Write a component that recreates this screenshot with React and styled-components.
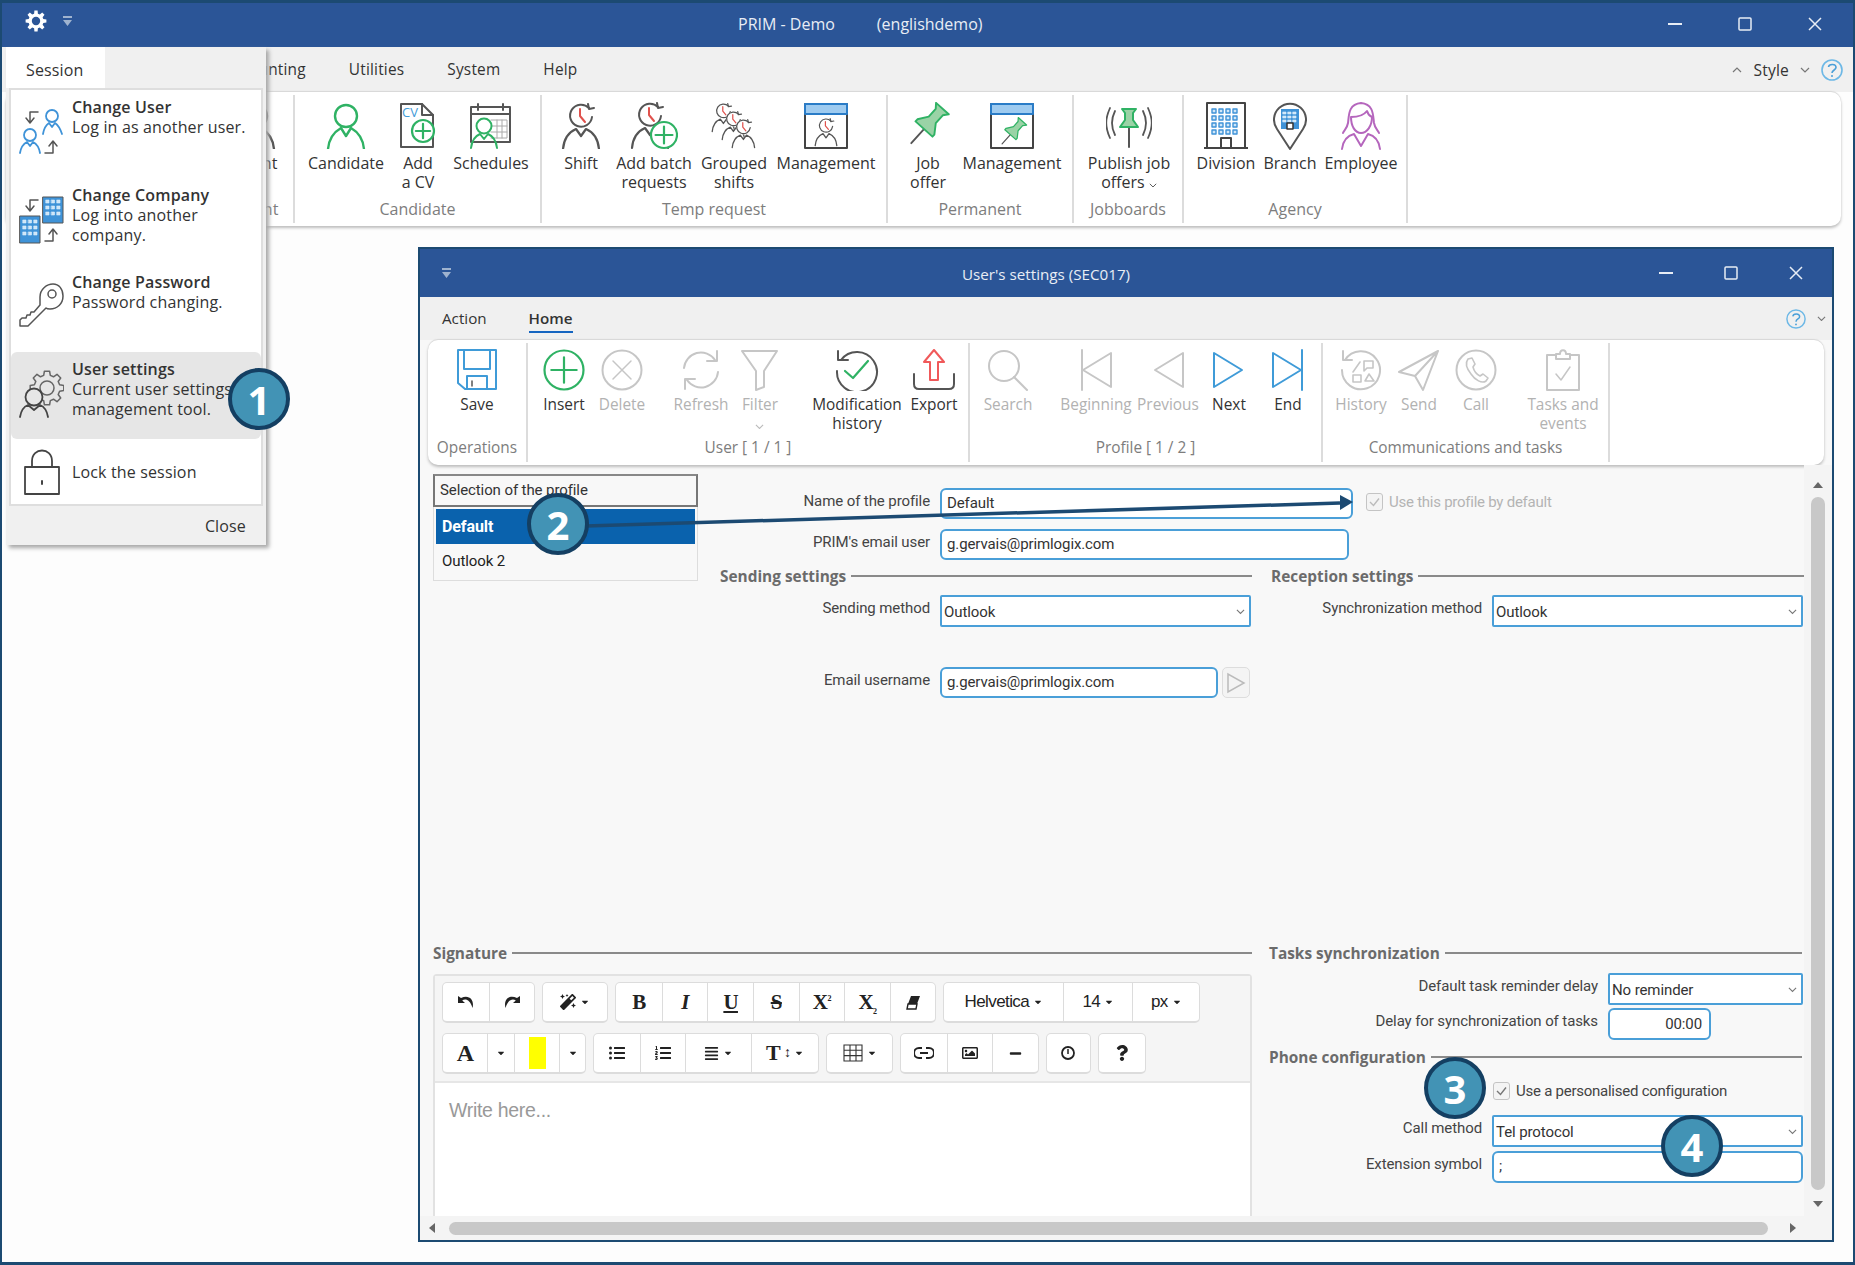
import React from "react";
import styled, { createGlobalStyle } from "styled-components";
import {
  FaMagic, FaListUl, FaListOl, FaAlignJustify,
  FaRegImage, FaMinus, FaQuestion, FaCaretDown,
} from "react-icons/fa";

const GREEN = "#2fb264";
const BLUE = "#3f9bd8";
const GREY = "#555";
const OFF = "#c6c6c6";
const NAVY = "#1c4a72";

const GlobalStyle = createGlobalStyle`
  html, body { margin: 0; padding: 0; background: #fff; }
  * { box-sizing: border-box; }
  body { font-family: "Open Sans", "Noto Sans", sans-serif; color: #333; }
`;

const Frame = styled.div`
  position: relative;
  width: 1855px;
  height: 1265px;
  overflow: hidden;
`;

const MainWindow = styled.div`
  display: flex;
  flex-direction: column;
  height: 100%;
  border: 2px solid ${NAVY};
  border-top-width: 3px;
  border-bottom-width: 3px;
  background: #fdfdfd;
`;

const TitleBar = styled.div`
  display: flex;
  align-items: center;
  height: 44px;
  flex: none;
  padding-bottom: 2px;
  background: #2b5597;
  color: #e8edf5;
  font-size: 16px;
`;

const TitleLeft = styled.div`
  display: flex;
  align-items: center;
  gap: 16px;
  padding: 0 0 6px 23px;
  width: ${(p) => p.$w}px;
  flex: none;
`;

const TitleText = styled.span`
  margin-right: 42px;
  white-space: nowrap;
`;

const WinButtons = styled.div`
  display: flex;
  margin-left: auto;
  margin-right: ${(p) => p.$right}px;
`;

const WinButton = styled.div`
  display: flex;
  align-items: center;
  justify-content: center;
  width: ${(p) => p.$w}px;
  height: 40px;
`;

const MenuBar = styled.div`
  display: flex;
  align-items: center;
  height: 45px;
  flex: none;
  padding-left: 222px;
  padding-right: 10px;
  gap: 43px;
  background: #f0f0f0;
  font-size: 15.4px;
  letter-spacing: 0.2px;
`;

const StyleBox = styled.div`
  display: flex;
  align-items: center;
  gap: 11px;
  margin-left: auto;
  font-size: 15.6px;
`;

const Ribbon = styled.div`
  display: flex;
  flex: none;
  height: ${(p) => (p.$compact ? 125 : 134)}px;
  margin: ${(p) => (p.$compact ? "0 8px 0 8px" : "0 12px 0 4px")};
  padding: 3px 0;
  background: #fff;
  border-radius: 10px;
  box-shadow: 0 2px 3px #bdbdbd, 0 -1px 1px #d8d8d8;
  font-size: ${(p) => (p.$compact ? 15.4 : 16)}px;
`;

const Group = styled.div`
  display: flex;
  flex-direction: column;
  width: ${(p) => p.$w}px;
  padding-left: ${(p) => p.$pad || 0}px;
  padding-top: ${(p) => p.$top}px;
  flex: none;
  border-right: 2px solid #dcdcdc;
`;

const GroupButtons = styled.div`
  display: flex;
  flex: 1;
  padding-left: ${(p) => p.$inset || 0}px;
`;

const GroupLabel = styled.div`
  text-align: center;
  line-height: 18px;
  margin-bottom: 5px;
  color: #7d7d7d;
`;

const RibbonBtn = styled.div`
  display: flex;
  flex-direction: column;
  align-items: center;
  flex: none;
  width: ${(p) => p.$w}px;
  margin-left: ${(p) => p.$ml || 0}px;
  color: ${(p) => (p.$off ? "#b2b2b2" : "#333")};
`;

const IconSlot = styled.div`
  display: flex;
  align-items: center;
  justify-content: center;
  height: ${(p) => p.$h}px;
  margin-bottom: 3px;
`;

const BtnText = styled.div`
  text-align: center;
  white-space: nowrap;
  line-height: 19px;
`;

const Workspace = styled.div`
  flex: 1;
  min-height: 0;
  padding: 21px 19px 20px 416px;
`;

const Dialog = styled.div`
  display: flex;
  flex-direction: column;
  height: 100%;
  border: 2px solid ${NAVY};
  background: #f8f8f8;
`;

const DialogTitle = styled.div`
  display: flex;
  align-items: center;
  height: 48px;
  flex: none;
  padding-left: 22px;
  background: #2b5597;
  color: #e8edf5;
  font-size: 15.2px;
`;

const DialogCaption = styled.span`
  margin-left: 511px;
  padding-top: 2px;
  white-space: nowrap;
`;

const DialogTabs = styled.div`
  display: flex;
  align-items: center;
  height: 43px;
  flex: none;
  padding: 0 6px 0 22px;
  background: #f0f0f0;
  font-size: 15.2px;
`;

const DialogTab = styled.div`
  margin-right: 42px;
  padding: 3px 0 3px;
  font-weight: ${(p) => (p.$active ? 600 : 400)};
  border-bottom: 2px solid ${(p) => (p.$active ? "#1565c0" : "transparent")};
`;

const HelpBox = styled.div`
  display: flex;
  align-items: center;
  gap: 11px;
  margin-left: auto;
`;

const BodyRow = styled.div`
  display: flex;
  flex: 1;
  min-height: 0;
`;

const Content = styled.div`
  flex: 1;
  min-width: 0;
  padding: 9px 0 0 13px;
  overflow: hidden;
  font-family: "Roboto", sans-serif;
  font-size: 15px;
  letter-spacing: -0.1px;
`;

const TopSection = styled.div`
  display: grid;
  grid-template-columns: 265px 1fr;
  column-gap: 22px;
  height: 470px;
`;

const ProfileList = styled.div`
  display: flex;
  flex-direction: column;
  height: 101px;
`;

const ProfileHeader = styled.div`
  display: flex;
  align-items: center;
  height: 33px;
  padding: 0 5px 2px;
  flex: none;
  border: 2px solid #777;
  border-top-color: #888;
  background: #f8f8f8;
`;

const ProfileItems = styled.div`
  flex: 1;
  padding: 2px;
  border: 1px solid #ddd;
  border-top: none;
`;

const ProfileItem = styled.div`
  display: flex;
  align-items: center;
  height: ${(p) => (p.$active ? 35 : 30)}px;
  padding-left: 6px;
  margin-bottom: 2px;
  color: ${(p) => (p.$active ? "#fff" : "#222")};
  background: ${(p) => (p.$active ? "#0a62ad" : "transparent")};
  font-size: ${(p) => (p.$active ? 16 : 15)}px;
  font-weight: ${(p) => (p.$active ? 700 : 400)};
`;

const Field = styled.div`
  display: flex;
  align-items: flex-start;
  gap: 10px;
  margin-top: ${(p) => p.$top || 0}px;
`;

const FieldLabel = styled.div`
  width: ${(p) => p.$w}px;
  flex: none;
  padding-top: 4px;
  text-align: right;
  color: #444;
  white-space: nowrap;
`;

const Control = styled.div`
  display: flex;
  align-items: center;
  justify-content: ${(p) => (p.$right ? "flex-end" : "space-between")};
  width: ${(p) => p.$w}px;
  height: ${(p) => p.$h || 32}px;
  flex: none;
  padding: ${(p) => (p.$square ? "2px 4px 0 2px" : p.$right ? "0 7px 0 5px" : "0 4px 2px 5px")};
  background: #fff;
  border: 2px solid #4a9fd8;
  border-radius: ${(p) => (p.$square ? 2 : 6)}px;
  color: #333;
`;

const SendBtn = styled.div`
  display: flex;
  align-items: center;
  justify-content: center;
  width: 28px;
  height: 31px;
  margin-left: -6px;
  border: 1px solid #ddd;
  border-radius: 5px;
  background: #f4f4f4;
`;

const Check = styled.div`
  display: flex;
  align-items: center;
  justify-content: center;
  width: 17px;
  height: 18px;
  flex: none;
  background: #f4f4f4;
  border: 1px solid #c4c4c4;
  border-radius: 3px;
`;

const CheckLine = styled.div`
  display: flex;
  align-items: center;
  gap: 6px;
  margin-top: ${(p) => p.$top || 0}px;
  margin-left: ${(p) => p.$left || 0}px;
  color: ${(p) => (p.$off ? "#b4b4b4" : "#444")};
  letter-spacing: -0.25px;
  white-space: nowrap;
`;

const Legend = styled.div`
  display: flex;
  align-items: center;
  gap: 5px;
  height: 18px;
  margin-top: ${(p) => p.$top || 0}px;
  color: #6b6b6b;
  font-family: "Open Sans", sans-serif;
  font-size: 15.4px;
  font-weight: 700;
  letter-spacing: 0;

  &::after {
    content: "";
    flex: 1;
    height: 2px;
    background: #8a8a8a;
  }
`;

const TwoCols = styled.div`
  display: grid;
  grid-template-columns: ${(p) => p.$cols};
  column-gap: ${(p) => p.$gap}px;
  margin-top: ${(p) => p.$top || 0}px;
`;

const Editor = styled.div`
  height: 290px;
  margin-top: 12px;
  border: 2px solid #e2e2e2;
  border-bottom: none;
  border-radius: 4px 4px 0 0;
  background: #fff;
  font-family: "Liberation Sans", sans-serif;
`;

const EditorToolbar = styled.div`
  display: flex;
  flex-direction: column;
  gap: 10px;
  height: 107px;
  padding: 6px 7px 0;
  background: #f5f5f5;
  border-bottom: 2px solid #e6e6e6;
`;

const ToolRow = styled.div`
  display: flex;
  gap: 7px;
`;

const ToolGroup = styled.div`
  display: flex;
  height: 41px;
  background: #fff;
  border: 1px solid #dcdcdc;
  border-bottom-width: 2px;
  border-radius: 5px;
`;

const Tool = styled.div`
  display: flex;
  align-items: center;
  justify-content: center;
  gap: 4px;
  width: ${(p) => p.$w || 45.6}px;
  color: #222;
  font-size: 17px;
  letter-spacing: -0.6px;

  & + & {
    border-left: 1px solid #dcdcdc;
  }
`;

const Glyph = styled.span`
  font-family: "Liberation Serif", serif;
  font-size: ${(p) => p.$size || 21}px;
  font-weight: ${(p) => (p.$thin ? 400 : 700)};
  font-style: ${(p) => (p.$italic ? "italic" : "normal")};
  text-decoration: ${(p) => (p.$under ? "underline" : p.$strike ? "line-through" : "none")};
  color: #222;

  sup, sub {
    font-size: 8px;
    line-height: 0;
  }
`;

const Swatch = styled.div`
  width: 17px;
  height: 32px;
  background: #ffff00;
`;

const Placeholder = styled.div`
  padding: 16px 14px;
  color: #999;
  font-size: 19.5px;
  letter-spacing: -0.3px;
`;

const VScroll = styled.div`
  display: flex;
  flex-direction: column;
  align-items: center;
  width: 28px;
  flex: none;
  padding: 17px 0 9px;
  background: #f4f4f4;
`;

const HScroll = styled.div`
  display: flex;
  align-items: center;
  gap: 14px;
  height: 24px;
  flex: none;
  padding: 0 36px 0 9px;
  background: #f4f4f4;
`;

const ScrollThumb = styled.div`
  flex: 1;
  border-radius: 7px;
  background: #c8c8c8;
  ${(p) => (p.$flat ? "height: 13px;" : "width: 14px; margin: 9px 0 11px;")}
`;

const Arrow = styled.div`
  width: 0;
  height: 0;
  flex: none;
  border: 5px solid transparent;
  margin-left: ${(p) => p.$ml || 0}px;
  ${(p) => (p.$dir === "up" ? "border-bottom: 6px solid #666; border-top: none;" : "")}
  ${(p) => (p.$dir === "down" ? "border-top: 6px solid #666; border-bottom: none;" : "")}
  ${(p) => (p.$dir === "left" ? "border-right: 6px solid #666; border-left: none;" : "")}
  ${(p) => (p.$dir === "right" ? "border-left: 6px solid #666; border-right: none;" : "")}
`;

const SessionMenu = styled.div`
  position: absolute;
  left: 6px;
  top: 47px;
  display: flex;
  flex-direction: column;
  width: 260px;
  height: 498px;
  background: #f0f0f0;
  box-shadow: 3px 3px 4px #a8a8a8;
  font-size: 16px;
  letter-spacing: 0.15px;
`;

const SessionTab = styled.div`
  display: flex;
  align-items: center;
  width: 99px;
  height: 41px;
  flex: none;
  padding: 4px 0 0 20px;
  background: #fff;
`;

const SessionList = styled.div`
  display: flex;
  flex-direction: column;
  height: 418px;
  flex: none;
  margin: 0 3px;
  background: #fff;
  border: 2px solid #dedede;
`;

const SessionItem = styled.div`
  display: flex;
  align-items: ${(p) => (p.$center ? "center" : "flex-start")};
  gap: 8px;
  height: ${(p) => p.$h}px;
  flex: none;
  padding: ${(p) => (p.$center ? 0 : 7)}px 4px 0 8px;
  border-radius: 6px;
  background: ${(p) => (p.$active ? "#e6e6e6" : "transparent")};
  line-height: 20px;
  white-space: nowrap;
`;

const SessionIcon = styled.div`
  display: flex;
  justify-content: center;
  width: 45px;
  flex: none;
  margin-top: ${(p) => (p.$flat ? 0 : 11)}px;
`;

const SessionTitle = styled.div`
  font-weight: 600;
`;

const SessionClose = styled.div`
  flex: 1;
  display: flex;
  align-items: center;
  justify-content: flex-end;
  padding-right: 20px;
`;

const Badge = styled.div`
  position: absolute;
  left: ${(p) => p.$x - 31}px;
  top: ${(p) => p.$y - 31}px;
  display: flex;
  align-items: center;
  justify-content: center;
  width: 62px;
  height: 62px;
  border: 4px solid #143f62;
  border-radius: 50%;
  background: #4293b5;
  color: #fff;
  font-family: "Open Sans", sans-serif;
  font-size: 40px;
  font-weight: 700;
`;

const Overlay = styled.svg`
  position: absolute;
  left: 0;
  top: 0;
  pointer-events: none;
`;

const Svg = ({ w, h, vb, children }) => (
  <svg width={w} height={h} viewBox={vb || `0 0 ${w} ${h}`} fill="none" strokeLinecap="round" strokeLinejoin="round">
    {children}
  </svg>
);

// outline of a toothed wheel, used by the app menu and the settings entry
const gearPath = (cx, cy, ro, ri, teeth) => {
  const pts = [];
  const step = (Math.PI * 2) / teeth;
  for (let i = 0; i < teeth; i++) {
    const a = i * step - Math.PI / 2;
    [[-0.3, ri], [-0.18, ro], [0.18, ro], [0.3, ri]].forEach(([f, r]) => {
      pts.push(`${(cx + Math.cos(a + f * step * 1.1) * r).toFixed(1)} ${(cy + Math.sin(a + f * step * 1.1) * r).toFixed(1)}`);
    });
  }
  return `M${pts.join("L")}Z`;
};

const Person = ({ c, sw = 2.4, x = 0, y = 0, s = 1 }) => (
  <g transform={`translate(${x} ${y}) scale(${s})`} stroke={c} strokeWidth={sw} fill="none">
    <circle cx="20" cy="13" r="11" />
    <path d="M2 46C3 35 8 29 15 25L20 33L25 25C32 29 37 35 38 46" />
  </g>
);

const ClockPerson = ({ x = 0, y = 0, s = 1 }) => (
  <g transform={`translate(${x} ${y}) scale(${s})`} fill="none">
    <circle cx="20" cy="13" r="12" fill="#fff" stroke="none" />
    <path d="M28 5A11 11 0 1 0 31 14" stroke={GREY} strokeWidth="2" />
    <path d="M27 1L28 6L33 5" stroke={GREY} strokeWidth="2" />
    <path d="M19 6V13L24 19" stroke="#e0524d" strokeWidth="2" />
    <path d="M2 46C3 35 8 29 15 26L20 33L25 26C32 29 37 35 38 46" stroke={GREY} strokeWidth="2.2" fill="#fff" />
  </g>
);

const PlusCircle = ({ cx, cy, r, sw = 2.2, c = GREEN }) => (
  <g stroke={c} strokeWidth={sw} fill="#fff">
    <circle cx={cx} cy={cy} r={r} />
    <path d={`M${cx - r * 0.65} ${cy}H${cx + r * 0.65}M${cx} ${cy - r * 0.65}V${cy + r * 0.65}`} />
  </g>
);

const Pin = ({ x = 0, y = 0, s = 1 }) => (
  <g transform={`translate(${x} ${y}) scale(${s}) rotate(42 24 24)`}>
    <path d="M24 30V50" stroke={GREY} strokeWidth="2" />
    <path d="M15 1H33L29 6V17L36 27V30H12V27L19 17V6Z" fill="#9ad3a6" stroke={GREEN} strokeWidth="2" />
  </g>
);

const Panel = ({ children }) => (
  <Svg w={44} h={46}>
    <rect x="1" y="1" width="42" height="44" stroke="#444" strokeWidth="2" fill="#fff" />
    <rect x="1" y="1" width="42" height="10" fill="#9ecbf0" stroke="#2a7cc7" strokeWidth="2" />
    {children}
  </Svg>
);

const Windows = ({ x, y, cols, rows, w = 4, h = 4, gx = 7, gy = 7, sw = 1.4, c = "#3f93d8" }) => (
  <g stroke={c} strokeWidth={sw} fill="#cfe6f8">
    {Array.from({ length: rows }).map((_, r) =>
      Array.from({ length: cols }).map((__, i) => (
        <rect key={`${r}-${i}`} x={x + i * gx} y={y + r * gy} width={w} height={h} />
      ))
    )}
  </g>
);

const CandidateIcon = () => (
  <Svg w={40} h={46}><Person c={GREEN} /></Svg>
);

const ClientIcon = () => (
  <Svg w={40} h={46}><Person c={GREY} /></Svg>
);

const AddCvIcon = () => (
  <Svg w={36} h={46}>
    <path d="M1 1H22L33 12V44H1Z" stroke="#555" strokeWidth="2" fill="#fff" />
    <path d="M22 1V12H33" stroke="#555" strokeWidth="2" />
    <text x="2" y="14" fontSize="13" fill="#3f9bd8" fontFamily="Open Sans">CV</text>
    <PlusCircle cx={23} cy={28} r={11} />
  </Svg>
);

const SchedulesIcon = () => (
  <Svg w={42} h={46}>
    <rect x="1" y="4" width="39" height="35" stroke="#555" strokeWidth="2" fill="#fff" />
    <path d="M1 11H40M8 1V7M33 1V7" stroke="#555" strokeWidth="2" />
    <path d="M21 17H37V35H21M21 23H37M21 29H37M27 17V35M32 17V35" stroke="#aaa" strokeWidth="1" />
    <circle cx="14" cy="23" r="7.5" stroke={GREEN} strokeWidth="2" fill="#fff" />
    <path d="M1 45C2 37 5 33 10 31L14 36L18 31C23 33 26 37 27 45" stroke={GREEN} strokeWidth="2" />
  </Svg>
);

const ShiftIcon = () => <Svg w={40} h={46}><ClockPerson /></Svg>;

const BatchIcon = () => (
  <Svg w={48} h={48}>
    <ClockPerson />
    <PlusCircle cx={34} cy={33} r={13} />
  </Svg>
);

const GroupedIcon = () => (
  <Svg w={46} h={46}>
    <ClockPerson s={0.62} x={0} y={0} />
    <ClockPerson s={0.62} x={10} y={8} />
    <ClockPerson s={0.62} x={20} y={16} />
  </Svg>
);

const ManagementShiftIcon = () => (
  <Panel><ClockPerson x={10} y={15} s={0.6} /></Panel>
);

const JobIcon = () => <Svg w={46} h={48}><Pin s={0.95} /></Svg>;

const ManagementPinIcon = () => (
  <Panel><Pin x={8} y={14} s={0.62} /></Panel>
);

const PublishIcon = () => (
  <Svg w={46} h={46}>
    <path d="M23 24V44" stroke={GREY} strokeWidth="2" />
    <path d="M16 6H30L27 10V17L32 24H14L19 17V10Z" fill="#9ad3a6" stroke={GREEN} strokeWidth="2" />
    <path d="M9 8C5 16 5 24 9 32M4 5C-1 16 -1 24 4 35M37 8C41 16 41 24 37 32M42 5C47 16 47 24 42 35" stroke={GREY} strokeWidth="1.8" />
  </Svg>
);

const DivisionIcon = () => (
  <Svg w={44} h={48}>
    <path d="M3 46V1H41V46M0 46H44" stroke="#444" strokeWidth="2" />
    <Windows x={8} y={7} cols={4} rows={4} />
    <rect x="17" y="36" width="10" height="10" stroke="#444" strokeWidth="2" fill="#fff" />
  </Svg>
);

const BranchIcon = () => (
  <Svg w={34} h={48}>
    <path d="M17 47L4 27A16 16 0 1 1 30 27Z" stroke="#555" strokeWidth="2" fill="#fff" />
    <path d="M8 27V7H26V27Z" fill="#3f93d8" />
    <Windows x={10} y={10} cols={3} rows={3} w={3} h={2} gx={5} gy={4} sw={0.6} c="#dbeefc" />
    <rect x="14" y="21" width="6" height="6" stroke="#333" strokeWidth="1.5" fill="#fff" />
  </Svg>
);

const EmployeeIcon = () => (
  <Svg w={40} h={48}>
    <g stroke="#b566bd" strokeWidth="2" fill="none">
      <path d="M7 21C8 14 7 2 20 1C33 2 32 14 33 21C34 27 37 28 38 31M7 21C6 27 3 28 2 31" />
      <path d="M10 15C18 15 23 13 26 9C27 13 29 14 31 15M10 15C10 24 14 31 20 31C26 31 31 24 31 15" />
      <path d="M1 47C2 39 5 34 13 32L20 44L27 32C35 34 38 39 39 47" />
    </g>
  </Svg>
);

const SaveIcon = () => (
  <Svg w={40} h={42}>
    <path d="M1 1H39V40H8L1 34Z" stroke={BLUE} strokeWidth="2" fill="#fff" />
    <path d="M7 1V20H33V1M10 40V27H30V40" stroke={BLUE} strokeWidth="2" />
    <path d="M15 32V37" stroke={GREY} strokeWidth="1.5" />
  </Svg>
);

const InsertIcon = () => (
  <Svg w={42} h={42}><PlusCircle cx={21} cy={21} r={19.5} sw={2.2} /></Svg>
);

const DeleteIcon = () => (
  <Svg w={42} h={42}>
    <circle cx="21" cy="21" r="19.5" stroke={OFF} strokeWidth="2" />
    <path d="M12 12L30 30M30 12L12 30" stroke={OFF} strokeWidth="1.5" />
  </Svg>
);

const RefreshIcon = () => (
  <Svg w={42} h={42}>
    <g stroke={OFF} strokeWidth="2">
      <path d="M4 19A17 17 0 0 1 35 11M37 2V12H27" />
      <path d="M38 23A17 17 0 0 1 7 31M5 40V30H15" />
    </g>
  </Svg>
);

const FilterIcon = () => (
  <Svg w={38} h={42}>
    <path d="M1 2H36L23 22V38L15 41V22Z" stroke={OFF} strokeWidth="2" />
  </Svg>
);

const HistoryIcon = () => (
  <Svg w={44} h={42}>
    <path d="M6 11A20 20 0 1 1 2 22" stroke={GREY} strokeWidth="2" />
    <path d="M3 2V11H13" stroke={GREY} strokeWidth="2" />
    <path d="M10 22L18 29L33 12" stroke={GREEN} strokeWidth="2.2" />
  </Svg>
);

const ExportIcon = () => (
  <Svg w={42} h={42}>
    <path d="M21 1L31 13H25V31H17V13H11Z" stroke="#f0595a" strokeWidth="2" />
    <path d="M1 25V35C1 38 3 40 6 40H36C39 40 41 38 41 35V25" stroke={GREY} strokeWidth="2" />
  </Svg>
);

const SearchIcon = () => (
  <Svg w={42} h={42}>
    <circle cx="17" cy="17" r="15" stroke={OFF} strokeWidth="2" />
    <path d="M27 28L40 41" stroke={OFF} strokeWidth="2" />
  </Svg>
);

const NavIcon = ({ c, left, bar }) => (
  <Svg w={34} h={42}>
    {left ? (
      <>
        <path d="M32 4V38L4 21Z" stroke={c} strokeWidth="2" />
        {bar && <path d="M3 1V41" stroke={c} strokeWidth="2" />}
      </>
    ) : (
      <>
        <path d="M2 4V38L30 21Z" stroke={c} strokeWidth="2" />
        {bar && <path d="M31 1V41" stroke={c} strokeWidth="2" />}
      </>
    )}
  </Svg>
);

const CommHistoryIcon = () => (
  <Svg w={42} h={42}>
    <path d="M5 11A19 19 0 1 1 2 21" stroke={OFF} strokeWidth="2" />
    <path d="M3 2V11H12" stroke={OFF} strokeWidth="2" />
    <path d="M24 12H33V19H27L24 22ZM13 26H21V33H13ZM25 32L29 25L34 32ZM13 23L20 13" stroke={OFF} strokeWidth="1.6" />
  </Svg>
);

const SendIcon = () => (
  <Svg w={42} h={42}>
    <path d="M40 2L1 23L17 27L25 41ZM40 2L17 27" stroke={OFF} strokeWidth="2" />
  </Svg>
);

const CallIcon = () => (
  <Svg w={42} h={42}>
    <circle cx="21" cy="21" r="19.5" stroke={OFF} strokeWidth="2" />
    <path d="M13 10L17 9L20 15L18 18C19 22 21 25 25 27L28 25L33 29L31 32C27 35 20 31 16 25C12 20 10 14 13 10Z" stroke={OFF} strokeWidth="1.6" />
  </Svg>
);

const TasksIcon = () => (
  <Svg w={36} h={42}>
    <path d="M11 6H2V41H34V6H25" stroke={OFF} strokeWidth="2" />
    <path d="M11 10V5H15C15 0 21 0 21 5H25V10Z" stroke={OFF} strokeWidth="2" />
    <path d="M11 25L16 31L25 18" stroke={OFF} strokeWidth="1.5" />
  </Svg>
);

const GearIcon = () => (
  <svg width="22" height="22" viewBox="0 0 22 22" fill="none">
    <path d={gearPath(11, 11, 10.5, 7.6, 8)} fill="#fff" />
    <circle cx="11" cy="11" r="4.2" fill="#2b5597" />
  </svg>
);

const QatArrow = () => (
  <svg width="9" height="10" viewBox="0 0 9 10">
    <path d="M0 0H9V2H0ZM0 4H9L4.5 10Z" fill="#9fb3cf" />
  </svg>
);

const Help = ({ size = 21 }) => (
  <svg width={size} height={size} viewBox="0 0 22 22" fill="none">
    <circle cx="11" cy="11" r="10" stroke="#6db8e6" strokeWidth="1.6" />
    <path d="M7.5 8C8 4.5 15 4.5 15 8.5C15 11 11 11 11 14" stroke="#4a9fd8" strokeWidth="1.6" />
    <circle cx="11" cy="17" r="1" fill="#4a9fd8" />
  </svg>
);

const Chevron = ({ up, c = "#777", w = 10 }) => (
  <svg width={w} height={w * 0.6} viewBox="0 0 10 6" fill="none">
    <path d={up ? "M1 5L5 1L9 5" : "M1 1L5 5L9 1"} stroke={c} strokeWidth="1.2" />
  </svg>
);

const WinMin = () => (
  <svg width="14" height="2"><rect width="14" height="2" fill="#e8edf5" /></svg>
);

const WinMax = () => (
  <svg width="14" height="14" fill="none"><rect x="1" y="1" width="12" height="12" rx="1" stroke="#e8edf5" strokeWidth="1.5" /></svg>
);

const WinClose = () => (
  <svg width="14" height="14" fill="none"><path d="M1 1L13 13M13 1L1 13" stroke="#e8edf5" strokeWidth="1.5" /></svg>
);

const CheckMark = ({ c = "#777" }) => (
  <svg width="11" height="10" fill="none"><path d="M1 5L4.5 8.5L10 1.5" stroke={c} strokeWidth="1.4" /></svg>
);

const UsersSwapIcon = () => (
  <Svg w={45} h={46}>
    <g stroke="#3f93d8" strokeWidth="1.8">
      <circle cx="33" cy="8" r="6" />
      <path d="M24 26C25 20 27 17 30 15L33 19L36 15C39 17 41 20 43 26" />
      <circle cx="11" cy="27" r="6" />
      <path d="M1 45C2 39 4 36 8 34L11 38L14 34C18 36 20 39 21 45" />
    </g>
    <path d="M19 4H11V14M7 10L11 15L15 10M26 45H34V34M30 38L34 33L38 38" stroke={GREY} strokeWidth="1.5" />
  </Svg>
);

const CompanyIcon = () => (
  <Svg w={45} h={48}>
    <rect x="24" y="1" width="20" height="26" fill="#3f93d8" stroke="#555" />
    <Windows x={27} y={4} cols={3} rows={3} w={3} h={3} gx={5.5} gy={6} sw={0.6} c="#dbeefc" />
    <rect x="1" y="20" width="20" height="27" fill="#3f93d8" stroke="#555" />
    <Windows x={4} y={24} cols={3} rows={3} w={3} h={3} gx={5.5} gy={6} sw={0.6} c="#dbeefc" />
    <path d="M19 4H11V14M7 10L11 15L15 10M26 45H34V34M30 38L34 33L38 38" stroke={GREY} strokeWidth="1.5" />
  </Svg>
);

const KeyIcon = () => (
  <Svg w={45} h={46}>
    <path d="M21 14C21 6 28 1 34 1C40 1 44 6 44 13C44 21 38 26 31 26C29 26 28 26 27 25L9 43H1V37L3 35H7L8 32H11L12 29H15L21 22C21 19 21 17 21 14Z" stroke="#555" strokeWidth="1.5" />
    <circle cx="33" cy="11" r="4" stroke="#555" strokeWidth="1.5" />
  </Svg>
);

const GearUserIcon = () => (
  <Svg w={45} h={48}>
    <path d={gearPath(28, 18, 17, 13, 8)} stroke="#666" strokeWidth="1.5" />
    <circle cx="28" cy="18" r="7" stroke="#666" strokeWidth="1.5" />
    <circle cx="15" cy="27" r="8.5" fill="#e6e6e6" stroke="#444" strokeWidth="1.8" />
    <path d="M1 47C2 41 4 37 9 35L15 40L21 35C26 37 28 41 29 47" fill="#e6e6e6" stroke="#444" strokeWidth="1.8" />
  </Svg>
);

const LockIcon = () => (
  <Svg w={36} h={46}>
    <path d="M8 18V12C8 -2 28 -2 28 12V18" stroke="#444" strokeWidth="1.8" />
    <rect x="1" y="18" width="34" height="27" stroke="#444" strokeWidth="1.8" />
    <path d="M18 32V35" stroke="#444" strokeWidth="2" />
  </Svg>
);

const Caret = () => <FaCaretDown size={10} />;

const UndoGlyph = ({ flip }) => (
  <svg width="18" height="14" viewBox="0 0 18 14" style={flip ? { transform: "scaleX(-1)" } : undefined}>
    <path d="M1 1V8H8L5.2 5.4C8.5 3.4 13 4.5 15.5 13C17.5 6 13 -1 4 3Z" fill="#222" />
  </svg>
);

const EraserGlyph = () => (
  <svg width="15" height="15" viewBox="0 0 15 15">
    <path d="M5 1H14L11 9H2Z" fill="#222" />
    <path d="M2 9H11L10 14H1Z" fill="none" stroke="#222" strokeWidth="1.4" />
  </svg>
);

const LinkGlyph = () => (
  <svg width="20" height="14" viewBox="0 0 20 14" fill="none">
    <path d="M8 2H5A5 5 0 0 0 5 12H8M12 2H15A5 5 0 0 1 15 12H12M6 7H14" stroke="#222" strokeWidth="2" />
  </svg>
);

const GridGlyph = () => (
  <svg width="20" height="20" viewBox="0 0 20 20" fill="none">
    <path d="M1 2H19V18H1ZM1 7.3H19M1 12.6H19M7 2V18M13 2V18" stroke="#333" strokeWidth="1.1" />
  </svg>
);

const ClockGlyph = () => (
  <svg width="14" height="16" viewBox="0 0 14 16" fill="none">
    <circle cx="7" cy="8" r="6" stroke="#222" strokeWidth="1.8" />
    <path d="M7 4V9" stroke="#222" strokeWidth="1.5" />
  </svg>
);

const TextHeightGlyph = () => (
  <>
    <Glyph $size={22}>T</Glyph>
    <Glyph $size={14} $thin>↕</Glyph>
    <Caret />
  </>
);

const mainGroups = [
  { w: 289, pad: 215, label: "Client", buttons: [{ w: 70, icon: <ClientIcon />, text: "Client" }] },
  {
    w: 247, inset: 7, label: "Candidate",
    buttons: [
      { w: 88, icon: <CandidateIcon />, text: "Candidate" },
      { w: 56, icon: <AddCvIcon />, text: <>Add<br />a CV</> },
      { w: 90, icon: <SchedulesIcon />, text: "Schedules" },
    ],
  },
  {
    w: 346, inset: 9, label: "Temp request",
    buttons: [
      { w: 60, icon: <ShiftIcon />, text: "Shift" },
      { w: 86, icon: <BatchIcon />, text: <>Add batch<br />requests</> },
      { w: 74, icon: <GroupedIcon />, text: <>Grouped<br />shifts</> },
      { w: 110, icon: <ManagementShiftIcon />, text: "Management" },
    ],
  },
  {
    w: 186, inset: 7, label: "Permanent",
    buttons: [
      { w: 66, icon: <JobIcon />, text: <>Job<br />offer</> },
      { w: 102, icon: <ManagementPinIcon />, text: "Management" },
    ],
  },
  {
    w: 110, inset: 5, label: "Jobboards",
    buttons: [
      {
        w: 100, icon: <PublishIcon />,
        text: <>Publish job<br />offers <Chevron c="#555" w={8} /></>,
      },
    ],
  },
  {
    w: 224, inset: 9, label: "Agency",
    buttons: [
      { w: 66, icon: <DivisionIcon />, text: "Division" },
      { w: 62, icon: <BranchIcon />, text: "Branch" },
      { w: 80, icon: <EmployeeIcon />, text: "Employee" },
    ],
  },
];

const dialogGroups = [
  { w: 100, inset: 14, label: "Operations", buttons: [{ w: 70, icon: <SaveIcon />, text: "Save" }] },
  {
    w: 442, inset: 6, label: "User [ 1 / 1 ]",
    buttons: [
      { w: 60, icon: <InsertIcon />, text: "Insert" },
      { w: 56, off: true, icon: <DeleteIcon />, text: "Delete" },
      { w: 72, ml: 15, off: true, icon: <RefreshIcon />, text: "Refresh" },
      { w: 46, off: true, icon: <FilterIcon />, text: <>Filter<br /><Chevron c="#bbb" w={9} /></> },
      { w: 112, ml: 18, icon: <HistoryIcon />, text: <>Modification<br />history</> },
      { w: 42, icon: <ExportIcon />, text: "Export" },
    ],
  },
  {
    w: 353, inset: 8, label: "Profile [ 1 / 2 ]",
    buttons: [
      { w: 60, off: true, icon: <SearchIcon />, text: "Search" },
      { w: 80, ml: 18, off: true, icon: <NavIcon c={OFF} left bar />, text: "Beginning" },
      { w: 64, off: true, icon: <NavIcon c={OFF} left />, text: "Previous" },
      { w: 58, icon: <NavIcon c={BLUE} />, text: "Next" },
      { w: 60, icon: <NavIcon c={BLUE} bar />, text: "End" },
    ],
  },
  {
    w: 287, inset: 9, label: "Communications and tasks",
    buttons: [
      { w: 58, off: true, icon: <CommHistoryIcon />, text: "History" },
      { w: 58, off: true, icon: <SendIcon />, text: "Send" },
      { w: 56, off: true, icon: <CallIcon />, text: "Call" },
      { w: 76, ml: 21, off: true, icon: <TasksIcon />, text: <>Tasks and<br />events</> },
    ],
  },
];

const RibbonGroups = ({ groups, iconH, top }) =>
  groups.map((g) => (
    <Group key={g.label} $w={g.w} $pad={g.pad} $top={top}>
      <GroupButtons $inset={g.inset}>
        {g.buttons.map((b, i) => (
          <RibbonBtn key={i} $w={b.w} $ml={b.ml} $off={b.off}>
            <IconSlot $h={iconH}>{b.icon}</IconSlot>
            <BtnText>{b.text}</BtnText>
          </RibbonBtn>
        ))}
      </GroupButtons>
      <GroupLabel>{g.label}</GroupLabel>
    </Group>
  ));

const SelectBox = ({ w, children }) => (
  <Control $w={w} $square>
    {children}
    <Chevron w={9} />
  </Control>
);

const SignatureEditor = () => (
  <Editor>
    <EditorToolbar>
      <ToolRow>
        <ToolGroup>
          <Tool><UndoGlyph /></Tool>
          <Tool><UndoGlyph flip /></Tool>
        </ToolGroup>
        <ToolGroup>
          <Tool $w={64}><FaMagic size={16} /><Caret /></Tool>
        </ToolGroup>
        <ToolGroup>
          <Tool><Glyph>B</Glyph></Tool>
          <Tool><Glyph $italic>I</Glyph></Tool>
          <Tool><Glyph $under>U</Glyph></Tool>
          <Tool><Glyph $strike>S</Glyph></Tool>
          <Tool><Glyph>X<sup>2</sup></Glyph></Tool>
          <Tool><Glyph>X<sub>2</sub></Glyph></Tool>
          <Tool><EraserGlyph /></Tool>
        </ToolGroup>
        <ToolGroup>
          <Tool $w={119}>Helvetica <Caret /></Tool>
          <Tool $w={69}>14 <Caret /></Tool>
          <Tool $w={67}>px <Caret /></Tool>
        </ToolGroup>
      </ToolRow>
      <ToolRow>
        <ToolGroup>
          <Tool $w={44}><Glyph $size={24}>A</Glyph></Tool>
          <Tool $w={27}><Caret /></Tool>
          <Tool $w={45}><Swatch /></Tool>
          <Tool $w={26}><Caret /></Tool>
        </ToolGroup>
        <ToolGroup>
          <Tool><FaListUl size={16} /></Tool>
          <Tool><FaListOl size={16} /></Tool>
          <Tool $w={66}><FaAlignJustify size={15} /><Caret /></Tool>
          <Tool $w={67}><TextHeightGlyph /></Tool>
        </ToolGroup>
        <ToolGroup>
          <Tool $w={65}><GridGlyph /><Caret /></Tool>
        </ToolGroup>
        <ToolGroup>
          <Tool><LinkGlyph /></Tool>
          <Tool><FaRegImage size={16} /></Tool>
          <Tool><FaMinus size={13} /></Tool>
        </ToolGroup>
        <ToolGroup>
          <Tool $w={43}><ClockGlyph /></Tool>
        </ToolGroup>
        <ToolGroup>
          <Tool><FaQuestion size={16} /></Tool>
        </ToolGroup>
      </ToolRow>
    </EditorToolbar>
    <Placeholder>Write here...</Placeholder>
  </Editor>
);

const SessionPopup = () => (
  <SessionMenu>
    <SessionTab>Session</SessionTab>
    <SessionList>
      <SessionItem $h={88}>
        <SessionIcon><UsersSwapIcon /></SessionIcon>
        <div>
          <SessionTitle>Change User</SessionTitle>
          Log in as another user.
        </div>
      </SessionItem>
      <SessionItem $h={87}>
        <SessionIcon><CompanyIcon /></SessionIcon>
        <div>
          <SessionTitle>Change Company</SessionTitle>
          Log into another<br />company.
        </div>
      </SessionItem>
      <SessionItem $h={87}>
        <SessionIcon><KeyIcon /></SessionIcon>
        <div>
          <SessionTitle>Change Password</SessionTitle>
          Password changing.
        </div>
      </SessionItem>
      <SessionItem $h={87} $active>
        <SessionIcon><GearUserIcon /></SessionIcon>
        <div>
          <SessionTitle>User settings</SessionTitle>
          Current user settings<br />management tool.
        </div>
      </SessionItem>
      <SessionItem $h={65} $center>
        <SessionIcon $flat><LockIcon /></SessionIcon>
        <div>Lock the session</div>
      </SessionItem>
    </SessionList>
    <SessionClose>Close</SessionClose>
  </SessionMenu>
);

const SettingsDialog = () => (
  <Dialog>
    <DialogTitle>
      <QatArrow />
      <DialogCaption>User's settings (SEC017)</DialogCaption>
      <WinButtons $right={4}>
        <WinButton $w={65}><WinMin /></WinButton>
        <WinButton $w={65}><WinMax /></WinButton>
        <WinButton $w={65}><WinClose /></WinButton>
      </WinButtons>
    </DialogTitle>
    <DialogTabs>
      <DialogTab>Action</DialogTab>
      <DialogTab $active>Home</DialogTab>
      <HelpBox>
        <Help size={20} />
        <Chevron w={9} />
      </HelpBox>
    </DialogTabs>
    <Ribbon $compact>
      <RibbonGroups groups={dialogGroups} iconH={44} top={5} />
    </Ribbon>
    <BodyRow>
      <Content>
        <TopSection>
          <ProfileList>
            <ProfileHeader>Selection of the profile</ProfileHeader>
            <ProfileItems>
              <ProfileItem $active>Default</ProfileItem>
              <ProfileItem>Outlook 2</ProfileItem>
            </ProfileItems>
          </ProfileList>
          <div>
            <Field $top={14}>
              <FieldLabel $w={210}>Name of the profile</FieldLabel>
              <Control $w={413} $h={31}>Default</Control>
              <CheckLine $off $left={3} $top={5}>
                <Check><CheckMark c="#bbb" /></Check>
                Use this profile by default
              </CheckLine>
            </Field>
            <Field $top={10}>
              <FieldLabel $w={210}>PRIM's email user</FieldLabel>
              <Control $w={409} $h={31}>g.gervais@primlogix.com</Control>
            </Field>
            <TwoCols $cols="532px 1fr" $gap={19} $top={7}>
              <div>
                <Legend>Sending settings</Legend>
                <Field $top={10}>
                  <FieldLabel $w={210}>Sending method</FieldLabel>
                  <SelectBox w={311}>Outlook</SelectBox>
                </Field>
                <Field $top={40}>
                  <FieldLabel $w={210}>Email username</FieldLabel>
                  <Control $w={278} $h={31}>g.gervais@primlogix.com</Control>
                  <SendBtn>
                    <svg width="20" height="22" fill="none"><path d="M2 2V20L18 11Z" stroke="#bbb" strokeWidth="1.5" /></svg>
                  </SendBtn>
                </Field>
              </div>
              <div>
                <Legend>Reception settings</Legend>
                <Field $top={10}>
                  <FieldLabel $w={211}>Synchronization method</FieldLabel>
                  <SelectBox w={311}>Outlook</SelectBox>
                </Field>
              </div>
            </TwoCols>
          </div>
        </TopSection>
        <TwoCols $cols="819px 533px" $gap={17}>
          <div>
            <Legend>Signature</Legend>
            <SignatureEditor />
          </div>
          <div>
            <Legend>Tasks synchronization</Legend>
            <Field $top={11}>
              <FieldLabel $w={329}>Default task reminder delay</FieldLabel>
              <SelectBox w={195}>No reminder</SelectBox>
            </Field>
            <Field $top={3}>
              <FieldLabel $w={329}>Delay for synchronization of tasks</FieldLabel>
              <Control $w={103} $right>00:00</Control>
            </Field>
            <Legend $top={8}>Phone configuration</Legend>
            <CheckLine $top={16} $left={224}>
              <Check><CheckMark /></Check>
              Use a personalised configuration
            </CheckLine>
            <Field $top={15}>
              <FieldLabel $w={213}>Call method</FieldLabel>
              <SelectBox w={311}>Tel protocol</SelectBox>
            </Field>
            <Field $top={4}>
              <FieldLabel $w={213}>Extension symbol</FieldLabel>
              <Control $w={311}>;</Control>
            </Field>
          </div>
        </TwoCols>
      </Content>
      <VScroll>
        <Arrow $dir="up" />
        <ScrollThumb />
        <Arrow $dir="down" />
      </VScroll>
    </BodyRow>
    <HScroll>
      <Arrow $dir="left" />
      <ScrollThumb $flat />
      <Arrow $dir="right" $ml={8} />
    </HScroll>
  </Dialog>
);

const App = () => (
  <Frame>
    <GlobalStyle />
    <MainWindow>
      <TitleBar>
        <TitleLeft $w={736}>
          <GearIcon />
          <QatArrow />
        </TitleLeft>
        <TitleText>PRIM - Demo</TitleText>
        <TitleText>(englishdemo)</TitleText>
        <WinButtons $right={3}>
          <WinButton $w={70}><WinMin /></WinButton>
          <WinButton $w={70}><WinMax /></WinButton>
          <WinButton $w={70}><WinClose /></WinButton>
        </WinButtons>
      </TitleBar>
      <MenuBar>
        <span>Accounting</span>
        <span>Utilities</span>
        <span>System</span>
        <span>Help</span>
        <StyleBox>
          <Chevron up />
          <span>Style</span>
          <Chevron />
          <Help size={22} />
        </StyleBox>
      </MenuBar>
      <Ribbon>
        <RibbonGroups groups={mainGroups} iconH={50} top={6} />
      </Ribbon>
      <Workspace>
        <SettingsDialog />
      </Workspace>
    </MainWindow>
    <SessionPopup />
    <Overlay width="1855" height="1265">
      <path d="M586 526L1340 503" stroke="#1c4a72" strokeWidth="3.5" />
      <path d="M1353 502L1340 495V510Z" fill="#1c4a72" />
    </Overlay>
    <Badge $x={259} $y={399}>1</Badge>
    <Badge $x={558} $y={524}>2</Badge>
    <Badge $x={1455} $y={1088}>3</Badge>
    <Badge $x={1692} $y={1146}>4</Badge>
  </Frame>
);

export default App;
